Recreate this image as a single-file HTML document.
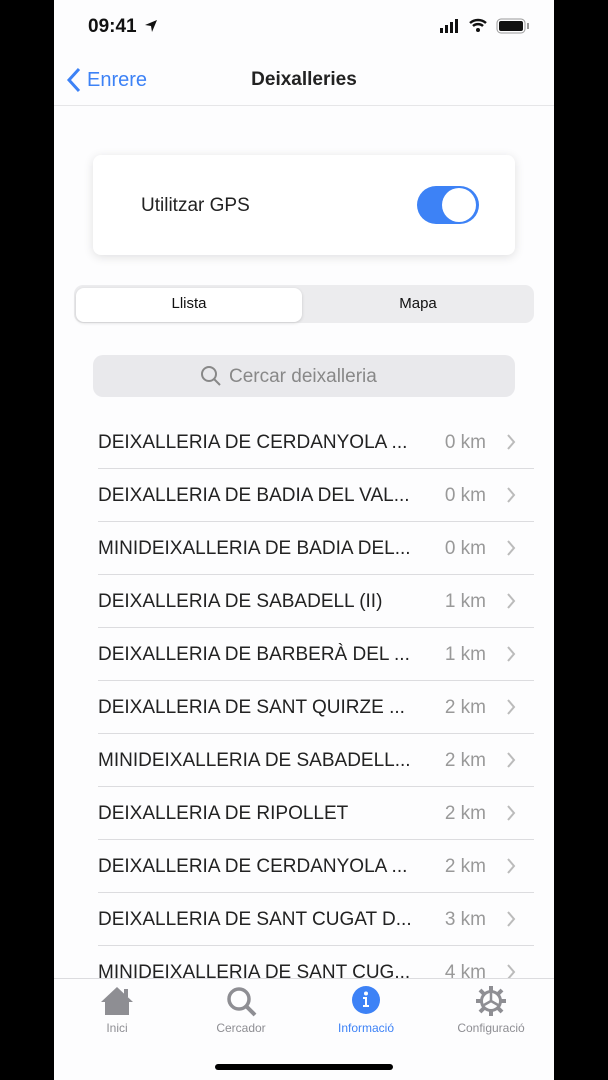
<!DOCTYPE html><html><head><style>
body{margin:0;width:608px;height:1080px;background:#000;position:relative;overflow:hidden;font-family:"Liberation Sans",sans-serif}
#s{position:absolute;left:54px;top:0;width:500px;height:1080px;background:#fdfdfe;overflow:hidden}
.a{position:absolute}
.row{position:absolute;left:44px;width:436px;height:53px;border-bottom:1px solid #dcdcdf;font-size:19px;color:#222}
.row .t{position:absolute;left:0;top:17px;white-space:nowrap}
.row .k{position:absolute;right:48px;top:17px;color:#999}
.row svg{position:absolute;right:18px;top:19px}
.tb{position:absolute;top:1021px;font-size:12px;color:#8e8e93;text-align:center;width:120px}
</style></head><body><div id="s">
<div class="a" style="left:34px;top:16px;font-size:19px;font-weight:bold;color:#111">09:41</div>
<svg class="a" style="left:90px;top:19px" width="14" height="14"><path d="M13 1L1 6l6 1 1 6z" fill="#111"/></svg>
<svg class="a" style="left:384px;top:18px" width="24" height="16"><rect x="2" y="10" width="3" height="5" fill="#111"/><rect x="7" y="7" width="3" height="8" fill="#111"/><rect x="12" y="4" width="3" height="11" fill="#111"/><rect x="17" y="1" width="3" height="14" fill="#111"/></svg>
<svg class="a" style="left:414px;top:17px" width="20" height="16"><path d="M2 6a12 12 0 0 1 16 0M5 9a7.5 7.5 0 0 1 10 0" stroke="#111" stroke-width="2.5" fill="none"/><circle cx="10" cy="13" r="2" fill="#111"/></svg>
<svg class="a" style="left:442px;top:18px" width="34" height="17"><rect x="1" y="1" width="28" height="14" rx="4" fill="none" stroke="#999"/><rect x="3" y="3" width="24" height="10" rx="2" fill="#111"/><rect x="31" y="5" width="2" height="6" fill="#999"/></svg>
<svg class="a" style="left:12px;top:67px" width="16" height="26"><path d="M13 2L3 13l10 11" stroke="#3d82f6" stroke-width="3" fill="none"/></svg>
<div class="a" style="left:33px;top:69px;font-size:20px;color:#3d82f6">Enrere</div>
<div class="a" style="left:0;width:500px;text-align:center;top:69px;font-size:19px;font-weight:bold;color:#222">Deixalleries</div>
<div class="a" style="left:0;top:105px;width:500px;height:1px;background:#e6e6e8"></div>
<div class="a" style="left:39px;top:155px;width:422px;height:100px;background:#fff;border-radius:8px;box-shadow:0 2px 10px rgba(0,0,0,.12)"></div>
<div class="a" style="left:87px;top:195px;font-size:19px;color:#222">Utilitzar GPS</div>
<div class="a" style="left:363px;top:186px;width:62px;height:38px;border-radius:19px;background:#3d82f6"></div>
<div class="a" style="left:388px;top:188px;width:34px;height:34px;border-radius:17px;background:#fff"></div>
<div class="a" style="left:20px;top:285px;width:460px;height:38px;border-radius:9px;background:#ececee"></div>
<div class="a" style="left:22px;top:288px;width:226px;height:34px;border-radius:8px;background:#fff;box-shadow:0 1px 3px rgba(0,0,0,.15);text-align:center;line-height:32px;font-size:15px;color:#111">Llista</div>
<div class="a" style="left:250px;top:288px;width:228px;text-align:center;line-height:32px;font-size:15px;color:#111">Mapa</div>
<div class="a" style="left:39px;top:355px;width:422px;height:42px;border-radius:10px;background:#e9e9ec"></div>
<svg class="a" style="left:146px;top:365px" width="22" height="22"><circle cx="9" cy="9" r="7" stroke="#888" stroke-width="2" fill="none"/><path d="M14 14l6 6" stroke="#888" stroke-width="2"/></svg>
<div class="a" style="left:175px;top:366px;font-size:19px;color:#888">Cercar deixalleria</div>
<div class="row" style="top:415px"><span class="t">DEIXALLERIA DE CERDANYOLA ...</span><span class="k">0 km</span><svg width="10" height="16"><path d="M2 1l6 7-6 7" stroke="#bbb" stroke-width="2" fill="none"/></svg></div>
<div class="row" style="top:468px"><span class="t">DEIXALLERIA DE BADIA DEL VAL...</span><span class="k">0 km</span><svg width="10" height="16"><path d="M2 1l6 7-6 7" stroke="#bbb" stroke-width="2" fill="none"/></svg></div>
<div class="row" style="top:521px"><span class="t">MINIDEIXALLERIA DE BADIA DEL...</span><span class="k">0 km</span><svg width="10" height="16"><path d="M2 1l6 7-6 7" stroke="#bbb" stroke-width="2" fill="none"/></svg></div>
<div class="row" style="top:574px"><span class="t">DEIXALLERIA DE SABADELL (II)</span><span class="k">1 km</span><svg width="10" height="16"><path d="M2 1l6 7-6 7" stroke="#bbb" stroke-width="2" fill="none"/></svg></div>
<div class="row" style="top:627px"><span class="t">DEIXALLERIA DE BARBERÀ DEL ...</span><span class="k">1 km</span><svg width="10" height="16"><path d="M2 1l6 7-6 7" stroke="#bbb" stroke-width="2" fill="none"/></svg></div>
<div class="row" style="top:680px"><span class="t">DEIXALLERIA DE SANT QUIRZE ...</span><span class="k">2 km</span><svg width="10" height="16"><path d="M2 1l6 7-6 7" stroke="#bbb" stroke-width="2" fill="none"/></svg></div>
<div class="row" style="top:733px"><span class="t">MINIDEIXALLERIA DE SABADELL...</span><span class="k">2 km</span><svg width="10" height="16"><path d="M2 1l6 7-6 7" stroke="#bbb" stroke-width="2" fill="none"/></svg></div>
<div class="row" style="top:786px"><span class="t">DEIXALLERIA DE RIPOLLET</span><span class="k">2 km</span><svg width="10" height="16"><path d="M2 1l6 7-6 7" stroke="#bbb" stroke-width="2" fill="none"/></svg></div>
<div class="row" style="top:839px"><span class="t">DEIXALLERIA DE CERDANYOLA ...</span><span class="k">2 km</span><svg width="10" height="16"><path d="M2 1l6 7-6 7" stroke="#bbb" stroke-width="2" fill="none"/></svg></div>
<div class="row" style="top:892px"><span class="t">DEIXALLERIA DE SANT CUGAT D...</span><span class="k">3 km</span><svg width="10" height="16"><path d="M2 1l6 7-6 7" stroke="#bbb" stroke-width="2" fill="none"/></svg></div>
<div class="row" style="top:945px"><span class="t">MINIDEIXALLERIA DE SANT CUG...</span><span class="k">4 km</span><svg width="10" height="16"><path d="M2 1l6 7-6 7" stroke="#bbb" stroke-width="2" fill="none"/></svg></div>
<div class="a" style="left:0;top:978px;width:500px;height:102px;background:#fdfdfe;border-top:1px solid #dcdcdf"></div>
<svg class="a" style="left:45px;top:985px" width="36" height="32"><path d="M18 2L2 17h4v13h24V17h4z" fill="#8e8e93"/><rect x="25" y="4" width="4" height="8" fill="#8e8e93"/></svg>
<svg class="a" style="left:171px;top:985px" width="34" height="34"><circle cx="14" cy="14" r="10" stroke="#8e8e93" stroke-width="3.5" fill="none"/><path d="M21 21l9 9" stroke="#8e8e93" stroke-width="4"/></svg>
<svg class="a" style="left:297px;top:985px" width="30" height="30"><circle cx="15" cy="15" r="14" fill="#3d82f6"/><circle cx="15" cy="8.5" r="2" fill="#fff"/><path d="M12 12h4v8h2v2h-6v-2h2v-6h-2z" fill="#fff"/></svg>
<svg class="a" style="left:421px;top:985px" width="32" height="32"><g stroke="#8e8e93" stroke-width="4"><path d="M16 1v30M1 16h30M5 5l22 22M27 5L5 27"/></g><circle cx="16" cy="16" r="11" fill="#8e8e93"/><circle cx="16" cy="16" r="8" fill="#fdfdfe"/><path d="M16 16V8M16 16l7 4M16 16l-7 4" stroke="#8e8e93" stroke-width="2.5"/></svg>
<div class="tb" style="left:3px">Inici</div>
<div class="tb" style="left:127px">Cercador</div>
<div class="tb" style="left:252px;color:#3d82f6">Informació</div>
<div class="tb" style="left:377px">Configuració</div>
<div class="a" style="left:161px;top:1064px;width:178px;height:6px;border-radius:3px;background:#000"></div>
</div></body></html>
